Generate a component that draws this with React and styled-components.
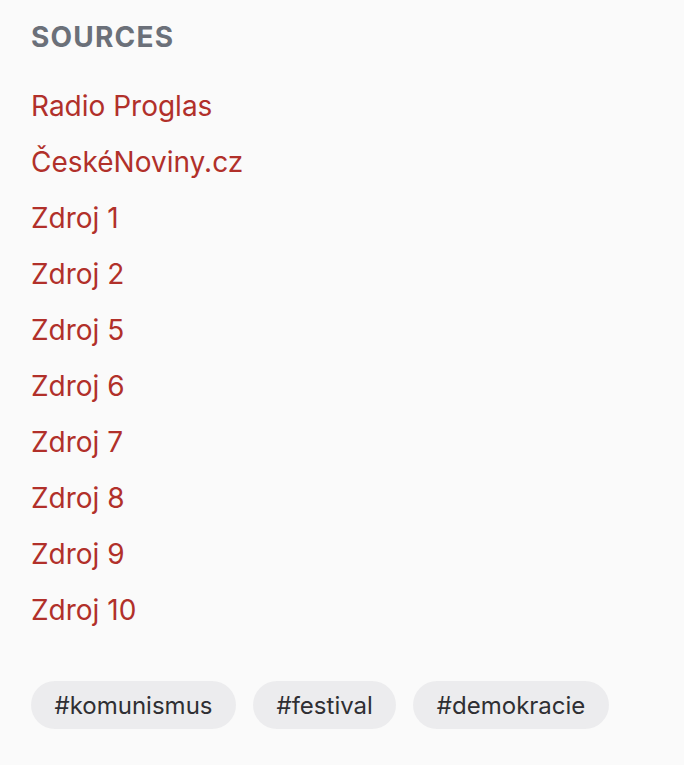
import React from 'react';
import styled, { createGlobalStyle } from 'styled-components';

const GlobalStyle = createGlobalStyle`
  html, body {
    margin: 0;
    padding: 0;
    background: #fafafa;
  }
  body {
    font-family: Inter, "Noto Sans", sans-serif;
  }
`;

const sources = [
	'Radio Proglas',
	'ČeskéNoviny.cz',
	'Zdroj 1',
	'Zdroj 2',
	'Zdroj 5',
	'Zdroj 6',
	'Zdroj 7',
	'Zdroj 8',
	'Zdroj 9',
	'Zdroj 10'
];

const tags = [ 'komunismus', 'festival', 'demokracie' ];

const App = () => {
	return (
		<>
			<GlobalStyle />
			<Panel>
				<Heading>Sources</Heading>
				<SourceList>
					{sources.map((s) => (
						<li key={s}>
							<SourceLink href="#">{s}</SourceLink>
						</li>
					))}
				</SourceList>
				<Tags>
					{tags.map((t) => <Tag key={t}>#{t}</Tag>)}
				</Tags>
			</Panel>
		</>
	);
};

const Panel = styled.section`
	background: #fafafa;
	min-height: 765px;
	box-sizing: border-box;
	padding: 20px 31px;
`;

const Heading = styled.h2`
	margin: 0;
	font-size: 28px;
	line-height: 34px;
	font-weight: 700;
	letter-spacing: 1.2px;
	text-transform: uppercase;
	color: #6b7079;
`;

const SourceList = styled.ul`
	list-style: none;
	margin: 0;
	padding: 0;
	margin-top: 24px;
	display: flex;
	flex-direction: column;
	li {
		height: 56px;
		display: flex;
		align-items: center;
	}
`;

const SourceLink = styled.a`
	color: #b1302a;
	font-size: 28px;
	text-decoration: none;
`;

const Tags = styled.div`
	display: flex;
	gap: 17px;
	margin-top: 43px;
`;

const Tag = styled.span`
	background: #ececee;
	color: #2f2f33;
	font-size: 24px;
	height: 48px;
	display: inline-flex;
	align-items: center;
	padding: 0 23.5px;
	border-radius: 24px;
`;

export default App;
